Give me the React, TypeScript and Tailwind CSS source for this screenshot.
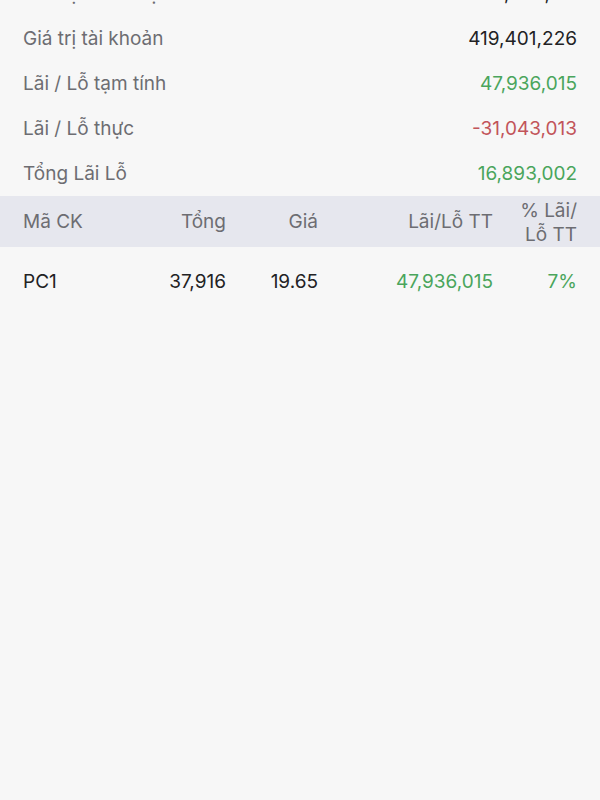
const summary = [
  { label: "Giá trị danh mục", value: "371,465,211", tone: "text-[#222224]" },
  { label: "Giá trị tài khoản", value: "419,401,226", tone: "text-[#222224]" },
  { label: "Lãi / Lỗ tạm tính", value: "47,936,015", tone: "text-[#4aa55c]" },
  { label: "Lãi / Lỗ thực", value: "-31,043,013", tone: "text-[#c2545a]" },
  { label: "Tổng Lãi Lỗ", value: "16,893,002", tone: "text-[#4aa55c]" },
];

const holdings = [
  { code: "PC1", total: "37,916", price: "19.65", pnl: "47,936,015", pct: "7%" },
];

export default function App() {
  return (
    <div className="w-[600px] h-[800px] overflow-hidden bg-[#f7f7f7] font-['Inter','Liberation_Sans',sans-serif] text-[19px]">
      {/* summary rows, first one scrolled partly out of view */}
      <div className="-mt-[28px] px-[23px]">
        {summary.map((row) => (
          <div key={row.label} className="flex h-[45px] items-center justify-between">
            <span className="text-[#6d6d72]">{row.label}</span>
            <span className={row.tone}>{row.value}</span>
          </div>
        ))}
      </div>

      {/* table header */}
      <div className="-mt-px flex h-[51px] items-center bg-[#e6e7ee] px-[23px] pt-[2px] text-[#6d6d72]">
        <div className="w-[120px]">Mã CK</div>
        <div className="w-[83px] text-right">Tổng</div>
        <div className="w-[92px] text-right">Giá</div>
        <div className="w-[175px] text-right">Lãi/Lỗ TT</div>
        <div className="flex-1 text-right leading-[24px]">
          % Lãi/
          <br />
          Lỗ TT
        </div>
      </div>

      {/* holdings */}
      {holdings.map((h) => (
        <div key={h.code} className="flex h-[70px] items-center px-[23px] pt-[1px] text-[#222224]">
          <div className="w-[120px]">{h.code}</div>
          <div className="w-[83px] text-right">{h.total}</div>
          <div className="w-[92px] text-right">{h.price}</div>
          <div className="w-[175px] text-right text-[#4aa55c]">{h.pnl}</div>
          <div className="flex-1 text-right text-[#4aa55c]">{h.pct}</div>
        </div>
      ))}
    </div>
  );
}
